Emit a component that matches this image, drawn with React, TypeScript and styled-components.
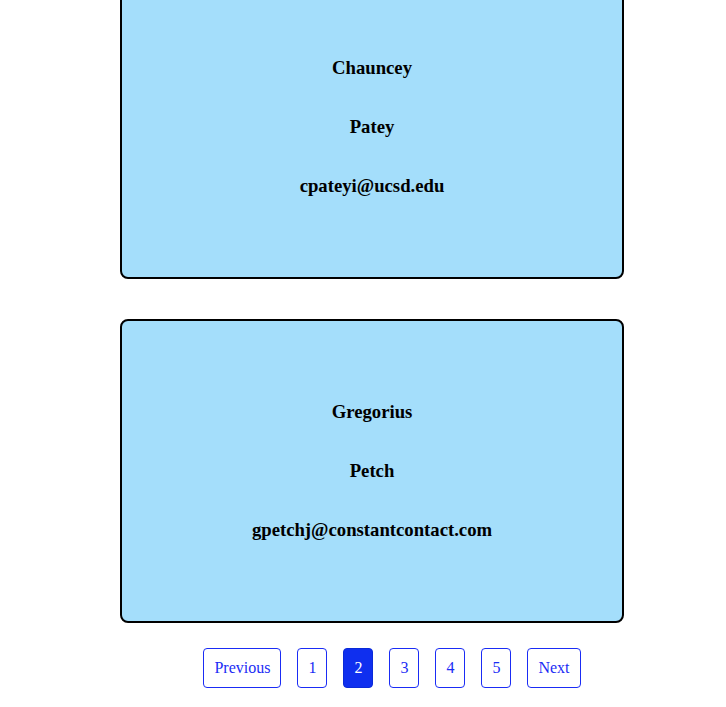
import React from "react";
import styled, { createGlobalStyle } from "styled-components";

const GlobalStyle = createGlobalStyle`
  html, body {
    margin: 0;
    padding: 0;
    background: #ffffff;
    font-family: "Liberation Serif", "Times New Roman", serif;
    overflow: hidden;
  }
`;

const Page = styled.div`
  width: 504px;
  margin: -25px 0 0 120px;
  display: flex;
  flex-direction: column;
  gap: 40px;
`;

const Card = styled.div`
  box-sizing: border-box;
  height: 304px;
  border: 2px solid #000000;
  border-radius: 8px;
  background: #a4defb;
  display: flex;
  flex-direction: column;
  align-items: center;
  justify-content: center;
  gap: 37px;
`;

const Field = styled.h3`
  margin: 0;
  font-size: 18.72px;
  line-height: 22px;
  font-weight: 700;
  color: #000000;
`;

const Pager = styled.ul`
  list-style: none;
  margin: -15px 0 0;
  padding: 0 0 0 40px;
  display: flex;
  justify-content: center;
  gap: 16px;
`;

const PageButton = styled.li<{ $active?: boolean }>`
  box-sizing: border-box;
  height: 40px;
  padding: 0 10px;
  min-width: 30px;
  border: 1px solid ${(p) => (p.$active ? "#0a2ad8" : "#1a2cf5")};
  border-radius: 4px;
  background: ${(p) => (p.$active ? "#0f2fef" : "#ffffff")};
  color: ${(p) => (p.$active ? "#ffffff" : "#1a2cf5")};
  font-size: 16px;
  line-height: 38px;
  text-align: center;
  cursor: pointer;
`;

const people = [
  { first: "Chauncey", last: "Patey", email: "cpateyi@ucsd.edu" },
  { first: "Gregorius", last: "Petch", email: "gpetchj@constantcontact.com" },
];

const pages = ["Previous", "1", "2", "3", "4", "5", "Next"];

export default function App() {
  return (
    <>
      <GlobalStyle />
      <Page>
        {people.map((p) => (
          <Card key={p.email}>
            <Field>{p.first}</Field>
            <Field>{p.last}</Field>
            <Field>{p.email}</Field>
          </Card>
        ))}
        <Pager>
          {pages.map((label) => (
            <PageButton key={label} $active={label === "2"}>
              {label}
            </PageButton>
          ))}
        </Pager>
      </Page>
    </>
  );
}
